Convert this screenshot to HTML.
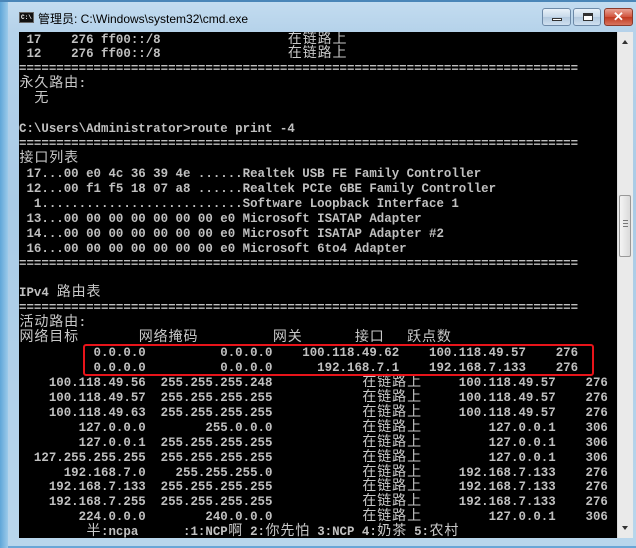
<!DOCTYPE html>
<html><head><meta charset="utf-8"><style>
*{margin:0;padding:0;box-sizing:border-box}
body{width:636px;height:546px;overflow:hidden;background:#6aa6d6;position:relative;font-family:"Liberation Sans","Noto Sans CJK SC",sans-serif}
.frame{position:absolute;left:0;top:0;width:636px;height:546px;background:linear-gradient(180deg,#c3dcf0 0,#b5d2ea 30px,#a9cbe6 200px,#b9d6ec 546px);border-top:2px solid #4a86b8}
.frame:before{content:"";position:absolute;left:0;top:0;width:8px;height:546px;background:linear-gradient(90deg,#5fa6d8,#9ccaea)}
.title{position:absolute;left:38px;top:10px;font-size:12px;color:#000;white-space:nowrap}
.ico{position:absolute;left:19px;top:12px;width:15px;height:11px;background:#111;border:1px solid #666;color:#fff;font:bold 6px "Liberation Mono",monospace;line-height:9px;padding-left:1px}
.btn{position:absolute;top:8px;height:18px;border:1px solid #6d8aa8;border-radius:3px;background:linear-gradient(180deg,#e9f1f9,#c8d9ea 50%,#b3c9de 51%,#cfe0f0)}
.btn.close{background:linear-gradient(180deg,#e8a394,#d0533c 50%,#c0391f 51%,#d8745e);border-color:#8a3a2c}
.term{position:absolute;left:19px;top:32px;width:598px;height:506px;background:#000;overflow:hidden}
.sb{position:absolute;left:617px;top:32px;width:16px;height:506px;background:#eaeaea;border-left:1px solid #dcdcdc}
.thumb{position:absolute;left:619px;top:195px;width:12px;height:62px;border:1px solid #999;border-radius:2px;background:linear-gradient(90deg,#f4f4f4,#dadada)}
.l{position:absolute;left:0;height:15px;line-height:15px;white-space:pre;font-family:"Liberation Mono",monospace;font-weight:bold;font-size:12.43px;color:#c0c0c0}
.c{display:inline-block;position:relative;top:-2px;width:14.92px;text-align:center;font-family:"Noto Sans CJK SC",sans-serif;font-weight:normal;font-size:14px;line-height:15px;height:15px;vertical-align:top;color:#c8c8c8}
.box{position:absolute;left:83px;top:344px;width:511px;height:32px;border:2px solid #e8141a;border-radius:3px}
</style></head><body>
<div class="frame"></div>
<div class="ico">C:\</div>
<div class="title">管理员: C:\Windows\system32\cmd.exe</div>
<div class="btn" style="left:542px;width:29px"><div style="position:absolute;left:9px;top:9px;width:10px;height:3px;background:#fff;border:1px solid #333"></div></div>
<div class="btn" style="left:573px;width:28px"><div style="position:absolute;left:9px;top:4px;width:10px;height:8px;border:1px solid #333;border-top:3px solid #333;background:#fff"></div></div>
<div class="btn close" style="left:604px;width:29px;color:#fff;font:bold 13px 'Liberation Sans',sans-serif;text-align:center;line-height:16px">✕</div>
<div class="term">
<div class="l" style="top:0.5px"> 17    276 ff00::/8                 <span class="c">在</span><span class="c">链</span><span class="c">路</span><span class="c">上</span></div>
<div class="l" style="top:15.4px"> 12    276 ff00::/8                 <span class="c">在</span><span class="c">链</span><span class="c">路</span><span class="c">上</span></div>
<div class="l" style="top:30.4px">===========================================================================</div>
<div class="l" style="top:45.3px"><span class="c">永</span><span class="c">久</span><span class="c">路</span><span class="c">由</span>:</div>
<div class="l" style="top:60.2px">  <span class="c">无</span></div>
<div class="l" style="top:90px">C:\Users\Administrator&gt;route print -4</div>
<div class="l" style="top:105px">===========================================================================</div>
<div class="l" style="top:119.9px"><span class="c">接</span><span class="c">口</span><span class="c">列</span><span class="c">表</span></div>
<div class="l" style="top:134.9px"> 17...00 e0 4c 36 39 4e ......Realtek USB FE Family Controller</div>
<div class="l" style="top:149.8px"> 12...00 f1 f5 18 07 a8 ......Realtek PCIe GBE Family Controller</div>
<div class="l" style="top:164.7px">  1...........................Software Loopback Interface 1</div>
<div class="l" style="top:179.7px"> 13...00 00 00 00 00 00 00 e0 Microsoft ISATAP Adapter</div>
<div class="l" style="top:194.6px"> 14...00 00 00 00 00 00 00 e0 Microsoft ISATAP Adapter #2</div>
<div class="l" style="top:209.5px"> 16...00 00 00 00 00 00 00 e0 Microsoft 6to4 Adapter</div>
<div class="l" style="top:224.5px">===========================================================================</div>
<div class="l" style="top:254.3px">IPv4 <span class="c">路</span><span class="c">由</span><span class="c">表</span></div>
<div class="l" style="top:269.3px">===========================================================================</div>
<div class="l" style="top:284.2px"><span class="c">活</span><span class="c">动</span><span class="c">路</span><span class="c">由</span>:</div>
<div class="l" style="top:299.1px"><span class="c">网</span><span class="c">络</span><span class="c">目</span><span class="c">标</span>        <span class="c">网</span><span class="c">络</span><span class="c">掩</span><span class="c">码</span>          <span class="c">网</span><span class="c">关</span>       <span class="c">接</span><span class="c">口</span>   <span class="c">跃</span><span class="c">点</span><span class="c">数</span></div>
<div class="l" style="top:314px">          0.0.0.0          0.0.0.0    100.118.49.62    100.118.49.57    276</div>
<div class="l" style="top:329px">          0.0.0.0          0.0.0.0      192.168.7.1    192.168.7.133    276</div>
<div class="l" style="top:343.9px">    100.118.49.56  255.255.255.248            <span class="c">在</span><span class="c">链</span><span class="c">路</span><span class="c">上</span>     100.118.49.57    276</div>
<div class="l" style="top:358.8px">    100.118.49.57  255.255.255.255            <span class="c">在</span><span class="c">链</span><span class="c">路</span><span class="c">上</span>     100.118.49.57    276</div>
<div class="l" style="top:373.8px">    100.118.49.63  255.255.255.255            <span class="c">在</span><span class="c">链</span><span class="c">路</span><span class="c">上</span>     100.118.49.57    276</div>
<div class="l" style="top:388.7px">        127.0.0.0        255.0.0.0            <span class="c">在</span><span class="c">链</span><span class="c">路</span><span class="c">上</span>         127.0.0.1    306</div>
<div class="l" style="top:403.6px">        127.0.0.1  255.255.255.255            <span class="c">在</span><span class="c">链</span><span class="c">路</span><span class="c">上</span>         127.0.0.1    306</div>
<div class="l" style="top:418.6px">  127.255.255.255  255.255.255.255            <span class="c">在</span><span class="c">链</span><span class="c">路</span><span class="c">上</span>         127.0.0.1    306</div>
<div class="l" style="top:433.5px">      192.168.7.0    255.255.255.0            <span class="c">在</span><span class="c">链</span><span class="c">路</span><span class="c">上</span>     192.168.7.133    276</div>
<div class="l" style="top:448.4px">    192.168.7.133  255.255.255.255            <span class="c">在</span><span class="c">链</span><span class="c">路</span><span class="c">上</span>     192.168.7.133    276</div>
<div class="l" style="top:463.4px">    192.168.7.255  255.255.255.255            <span class="c">在</span><span class="c">链</span><span class="c">路</span><span class="c">上</span>     192.168.7.133    276</div>
<div class="l" style="top:478.3px">        224.0.0.0        240.0.0.0            <span class="c">在</span><span class="c">链</span><span class="c">路</span><span class="c">上</span>         127.0.0.1    306</div>
<div class="l" style="top:493.2px">         <span class="c">半</span>:ncpa      :1:NCP<span class="c">啊</span> 2:<span class="c">你</span><span class="c">先</span><span class="c">怕</span> 3:NCP 4:<span class="c">奶</span><span class="c">茶</span> 5:<span class="c">农</span><span class="c">村</span></div>
</div>
<div class="box"></div>
<div class="sb"><div style="position:absolute;left:4px;top:8px;width:0;height:0;border-left:3px solid transparent;border-right:3px solid transparent;border-bottom:4px solid #333"></div><div style="position:absolute;left:4px;bottom:8px;width:0;height:0;border-left:3px solid transparent;border-right:3px solid transparent;border-top:4px solid #333"></div></div>
<div class="thumb"><div style="position:absolute;left:3px;top:24px;width:5px;height:1px;background:#777;box-shadow:0 3px 0 #777,0 6px 0 #777"></div></div>
</body></html>
